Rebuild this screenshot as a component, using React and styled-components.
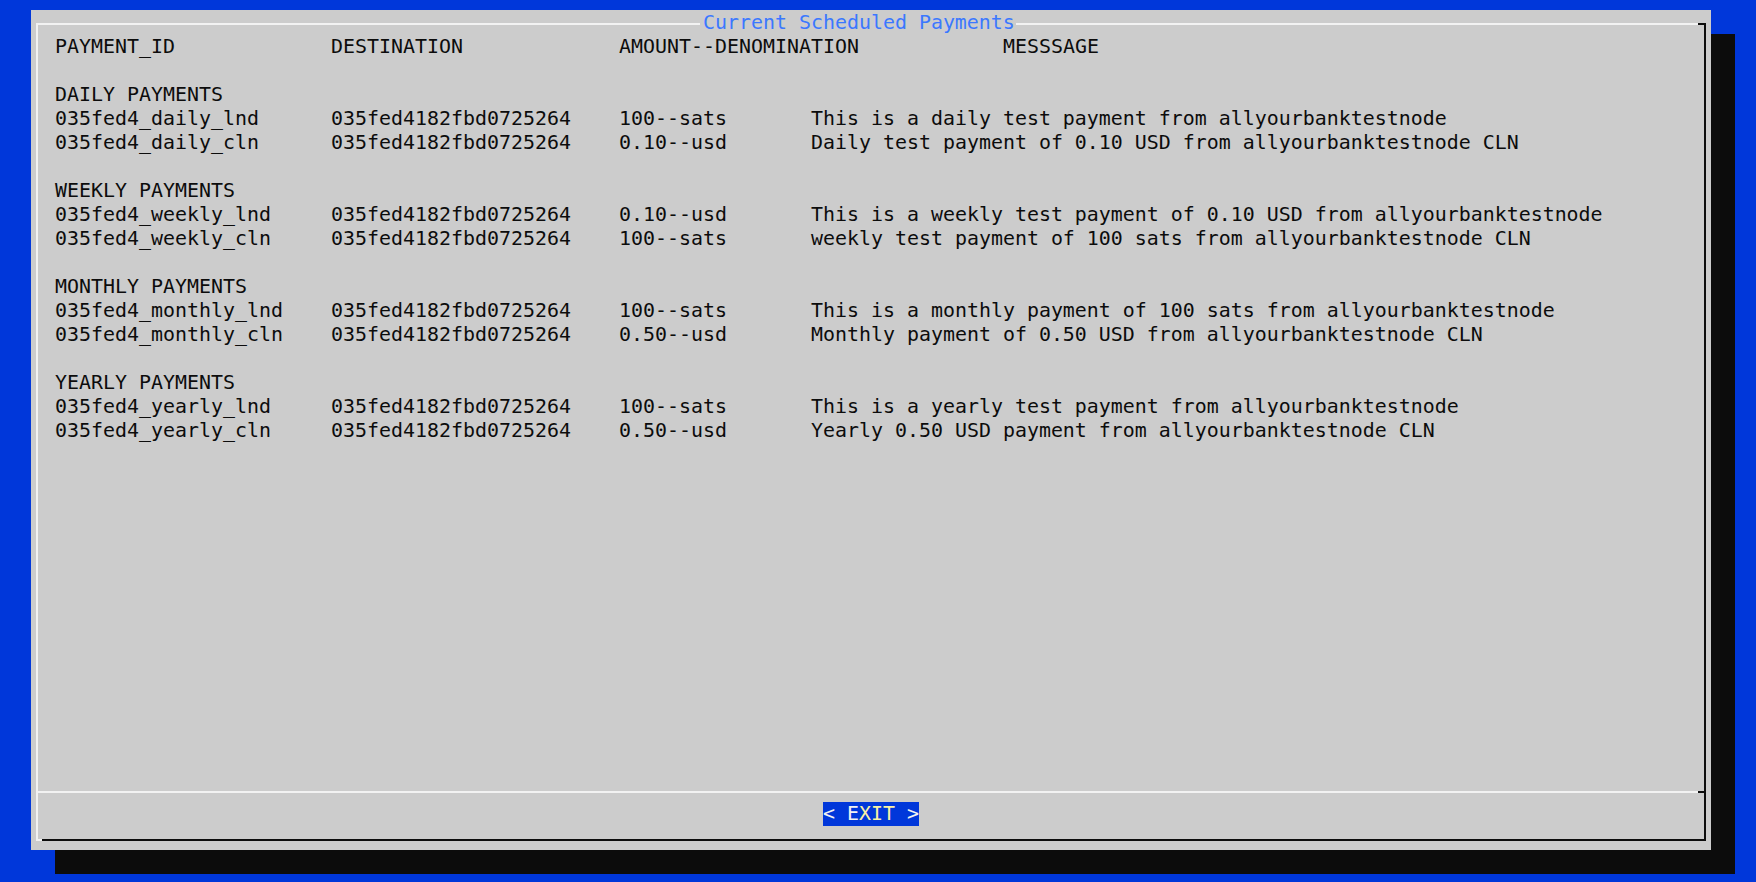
import styled, { createGlobalStyle } from "styled-components";

const GlobalStyle = createGlobalStyle`
  html, body {
    margin: 0;
    padding: 0;
    background: #0037da;
  }
`;

const Screen = styled.div`
  width: 1756px;
  height: 882px;
  box-sizing: border-box;
  padding: 10px 0 0 31px;
  background: #0037da;
  overflow: hidden;
  font-family: "DejaVu Sans Mono", "Liberation Mono", monospace;
  font-size: 19.93px;
  line-height: 24px;
  color: #0c0c0c;
`;

const Dialog = styled.div`
  width: 1680px;
  height: 840px;
  box-sizing: border-box;
  padding: 13px 5px 9px 5px;
  background: #cccccc;
  box-shadow: 24px 24px 0 #0c0c0c;
`;

const Frame = styled.div`
  position: relative;
  height: 100%;
  box-sizing: border-box;
  display: flex;
  flex-direction: column;
  border-top: 2px solid #f2f2f2;
  border-left: 2px solid #f2f2f2;
  border-right: 2px solid #0c0c0c;
  border-bottom: 2px solid #0c0c0c;

  &::before {
    content: "";
    position: absolute;
    top: -2px;
    right: -2px;
    width: 8px;
    height: 2px;
    background: #0c0c0c;
  }

  &::after {
    content: "";
    position: absolute;
    bottom: -2px;
    left: -2px;
    width: 6px;
    height: 2px;
    background: #f2f2f2;
  }
`;

const Title = styled.div`
  position: absolute;
  top: -14px;
  left: 662px;
  padding: 0 1px 0 3px;
  background: #cccccc;
  color: #3b78ff;
  white-space: pre;
`;

const Body = styled.div`
  flex: 1;
  padding: 10px 0 0 17px;
`;

const Row = styled.div`
  display: grid;
  grid-template-columns: ${(p) => p.$cols};
  height: 24px;
  white-space: pre;
`;

const Label = styled.div`
  height: 24px;
  white-space: pre;
`;

const Blank = styled.div`
  height: 24px;
`;

const Separator = styled.div`
  height: 2px;
  background: linear-gradient(
    to right,
    #f2f2f2 0,
    #f2f2f2 calc(100% - 6px),
    #0c0c0c calc(100% - 6px)
  );
`;

const Footer = styled.div`
  height: 46px;
  box-sizing: border-box;
  padding-top: 9px;
  display: flex;
  justify-content: center;
  align-items: flex-start;
`;

const Button = styled.div`
  height: 24px;
  background: #0037da;
  color: #f2f2f2;
  white-space: pre;
`;

const Hot = styled.span`
  color: #f9f1a5;
`;

const HEADER_COLS = "276px 288px 384px 1fr";
const DATA_COLS = "276px 288px 192px 1fr";

const groups = [
  {
    name: "DAILY PAYMENTS",
    rows: [
      ["035fed4_daily_lnd", "100--sats", "This is a daily test payment from allyourbanktestnode"],
      ["035fed4_daily_cln", "0.10--usd", "Daily test payment of 0.10 USD from allyourbanktestnode CLN"],
    ],
  },
  {
    name: "WEEKLY PAYMENTS",
    rows: [
      ["035fed4_weekly_lnd", "0.10--usd", "This is a weekly test payment of 0.10 USD from allyourbanktestnode"],
      ["035fed4_weekly_cln", "100--sats", "weekly test payment of 100 sats from allyourbanktestnode CLN"],
    ],
  },
  {
    name: "MONTHLY PAYMENTS",
    rows: [
      ["035fed4_monthly_lnd", "100--sats", "This is a monthly payment of 100 sats from allyourbanktestnode"],
      ["035fed4_monthly_cln", "0.50--usd", "Monthly payment of 0.50 USD from allyourbanktestnode CLN"],
    ],
  },
  {
    name: "YEARLY PAYMENTS",
    rows: [
      ["035fed4_yearly_lnd", "100--sats", "This is a yearly test payment from allyourbanktestnode"],
      ["035fed4_yearly_cln", "0.50--usd", "Yearly 0.50 USD payment from allyourbanktestnode CLN"],
    ],
  },
];

const DEST = "035fed4182fbd0725264";

export default function App() {
  return (
    <>
      <GlobalStyle />
      <Screen>
        <Dialog>
          <Frame>
            <Title>Current Scheduled Payments</Title>
            <Body>
              <Row $cols={HEADER_COLS}>
                <span>PAYMENT_ID</span>
                <span>DESTINATION</span>
                <span>AMOUNT--DENOMINATION</span>
                <span>MESSSAGE</span>
              </Row>
              {groups.map((g) => (
                <div key={g.name}>
                  <Blank />
                  <Label>{g.name}</Label>
                  {g.rows.map(([id, amount, msg]) => (
                    <Row key={id} $cols={DATA_COLS}>
                      <span>{id}</span>
                      <span>{DEST}</span>
                      <span>{amount}</span>
                      <span>{msg}</span>
                    </Row>
                  ))}
                </div>
              ))}
            </Body>
            <Separator />
            <Footer>
              <Button>
                {"< E"}
                <Hot>XIT</Hot>
                {" >"}
              </Button>
            </Footer>
          </Frame>
        </Dialog>
      </Screen>
    </>
  );
}
